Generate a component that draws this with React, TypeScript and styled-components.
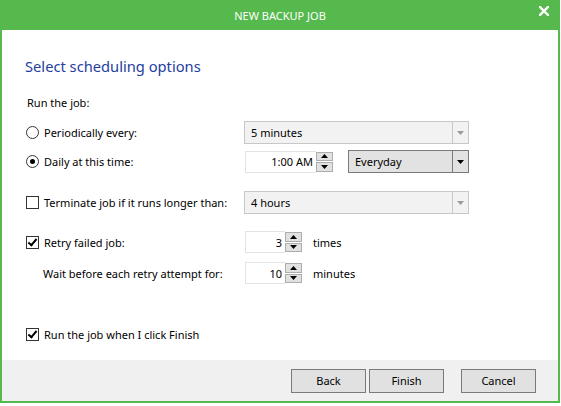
import React from "react";
import styled, { createGlobalStyle } from "styled-components";

const GlobalStyle = createGlobalStyle`
  html, body {
    margin: 0;
    padding: 0;
    background: #fff;
  }
  body {
    font-family: "Noto Sans", "Open Sans", sans-serif;
    font-size: 11px;
    color: #000;
  }
`;

const GREEN = "#56b94d";

const ArrowDown = ({ color }: { color: string }) => (
  <svg width="7" height="4" viewBox="0 0 7 4">
    <path d="M0 0h7L3.5 4z" fill={color} />
  </svg>
);

const ArrowUp = ({ color }: { color: string }) => (
  <svg width="7" height="4" viewBox="0 0 7 4">
    <path d="M0 4h7L3.5 0z" fill={color} />
  </svg>
);

const Combo = ({
  value,
  width,
  active,
}: {
  value: string;
  width: number;
  active?: boolean;
}) => (
  <ComboBox $width={width} $active={active}>
    <ComboText>{value}</ComboText>
    <ComboArrow $active={active}>
      <ArrowDown color={active ? "#000" : "#9a9a9a"} />
    </ComboArrow>
  </ComboBox>
);

const Spinner = ({ value, width }: { value: string; width: number }) => (
  <SpinWrap>
    <SpinField $width={width}>{value}</SpinField>
    <SpinButtons>
      <SpinButton>
        <ArrowUp color="#000" />
      </SpinButton>
      <SpinButton>
        <ArrowDown color="#000" />
      </SpinButton>
    </SpinButtons>
  </SpinWrap>
);

const App = (): JSX.Element => {
  return (
    <>
      <GlobalStyle />
      <Window>
        <TitleBar>
          NEW BACKUP JOB
          <CloseButton>
            <svg width="10" height="10" viewBox="0 0 10 10">
              <path
                d="M1 1L9 9M9 1L1 9"
                stroke="#fff"
                strokeWidth="2.4"
                strokeLinecap="square"
              />
            </svg>
          </CloseButton>
        </TitleBar>
        <Content>
          <Heading>Select scheduling options</Heading>

          <Row $top={16}>
            <Label>Run the job:</Label>
          </Row>

          <Row $top={7}>
            <Option>
              <Radio />
              Periodically every:
            </Option>
            <Combo value="5 minutes" width={225} />
          </Row>

          <Row $top={6}>
            <Option>
              <Radio $checked />
              Daily at this time:
            </Option>
            <Controls>
              <Spinner value="1:00 AM" width={71} />
              <Combo value="Everyday" width={121} active />
            </Controls>
          </Row>

          <Row $top={18}>
            <Option>
              <Checkbox />
              Terminate job if it runs longer than:
            </Option>
            <Combo value="4 hours" width={225} />
          </Row>

          <Row $top={17}>
            <Option>
              <Checkbox $checked />
              Retry failed job:
            </Option>
            <Controls>
              <Spinner value="3" width={40} />
              <Unit>times</Unit>
            </Controls>
          </Row>

          <Row $top={9}>
            <Option $indent>Wait before each retry attempt for:</Option>
            <Controls>
              <Spinner value="10" width={40} />
              <Unit>minutes</Unit>
            </Controls>
          </Row>

          <Row $top={39}>
            <Option>
              <Checkbox $checked />
              Run the job when I click Finish
            </Option>
          </Row>
        </Content>
        <Footer>
          <Button>Back</Button>
          <Button>Finish</Button>
          <Button $gap>Cancel</Button>
        </Footer>
      </Window>
    </>
  );
};

export default App;

const Window = styled.div`
  width: 560px;
  height: 403px;
  box-sizing: border-box;
  border: 2px solid ${GREEN};
  border-top: none;
  display: flex;
  flex-direction: column;
  background: #fff;
`;

const TitleBar = styled.div`
  position: relative;
  height: 30px;
  margin: 0 -2px;
  background: ${GREEN};
  color: #fff;
  display: flex;
  align-items: center;
  justify-content: center;
  font-size: 11px;
`;

const CloseButton = styled.div`
  position: absolute;
  right: 11px;
  top: 6px;
  width: 10px;
  height: 10px;
  display: flex;
`;

const Content = styled.div`
  flex: 1;
  padding: 26px 0 0 23px;
`;

const Heading = styled.div`
  font-size: 14.7px;
  line-height: 20px;
  color: #1f3e9e;
`;

const Row = styled.div<{ $top: number }>`
  margin-top: ${({ $top }) => $top}px;
  display: grid;
  grid-template-columns: 219px auto;
  align-items: center;
  min-height: 22px;
`;

const Label = styled.div`
  line-height: 22px;
  padding-left: 2px;
`;

const Option = styled.div<{ $indent?: boolean }>`
  display: flex;
  align-items: center;
  gap: 5px;
  padding-left: ${({ $indent }) => ($indent ? "18px" : "1px")};
  white-space: nowrap;
`;

const Radio = styled.span<{ $checked?: boolean }>`
  width: 11px;
  height: 11px;
  border: 1px solid #333;
  border-radius: 50%;
  background: #fff;
  display: flex;
  align-items: center;
  justify-content: center;

  &::after {
    content: "";
    width: 5px;
    height: 5px;
    border-radius: 50%;
    background: ${({ $checked }) => ($checked ? "#000" : "transparent")};
  }
`;

const Checkbox = styled.span<{ $checked?: boolean }>`
  width: 11px;
  height: 11px;
  border: 1px solid #333;
  background: #fff;
  position: relative;

  &::after {
    content: "";
    display: ${({ $checked }) => ($checked ? "block" : "none")};
    position: absolute;
    left: 3px;
    top: 0px;
    width: 3px;
    height: 7px;
    border: solid #000;
    border-width: 0 2px 2px 0;
    transform: rotate(40deg);
  }
`;

const Controls = styled.div`
  display: flex;
  align-items: center;
`;

const ComboBox = styled.div<{ $width: number; $active?: boolean }>`
  width: ${({ $width }) => $width}px;
  height: 23px;
  box-sizing: border-box;
  border: 1px solid ${({ $active }) => ($active ? "#7a7a7a" : "#c8c8c8")};
  background: ${({ $active }) => ($active ? "#e2e2e2" : "#f2f2f2")};
  display: flex;
  align-items: center;
  margin-left: ${({ $active }) => ($active ? "15px" : "0")};
`;

const ComboText = styled.div`
  flex: 1;
  padding-left: 6px;
`;

const ComboArrow = styled.div<{ $active?: boolean }>`
  width: 15px;
  height: 100%;
  border-left: 1px solid ${({ $active }) => ($active ? "#7a7a7a" : "#c8c8c8")};
  display: flex;
  align-items: center;
  justify-content: center;
`;

const SpinWrap = styled.div`
  display: flex;
  height: 22px;
  margin-left: 1px;
`;

const SpinField = styled.div<{ $width: number }>`
  width: ${({ $width }) => $width}px;
  box-sizing: border-box;
  border: 1px solid #e3e3e3;
  border-right: none;
  display: flex;
  align-items: center;
  justify-content: flex-end;
  padding-right: 3px;
`;

const SpinButtons = styled.div`
  width: 17px;
  display: flex;
  flex-direction: column;
  gap: 1px;
  padding: 1px 0;
  box-sizing: border-box;
`;

const SpinButton = styled.div`
  flex: 1;
  box-sizing: border-box;
  border: 1px solid #adadad;
  background: #e1e1e1;
  display: flex;
  align-items: center;
  justify-content: center;
`;

const Unit = styled.span`
  margin-left: 11px;
`;

const Footer = styled.div`
  height: 41px;
  background: #f0f0f0;
  display: flex;
  align-items: center;
  justify-content: flex-end;
  gap: 3px;
  padding-right: 22px;
`;

const Button = styled.div<{ $gap?: boolean }>`
  width: 75px;
  height: 24px;
  box-sizing: border-box;
  border: 1px solid #7a7a7a;
  background: #e1e1e1;
  display: flex;
  align-items: center;
  justify-content: center;
  margin-left: ${({ $gap }) => ($gap ? "14px" : "0")};
`;
